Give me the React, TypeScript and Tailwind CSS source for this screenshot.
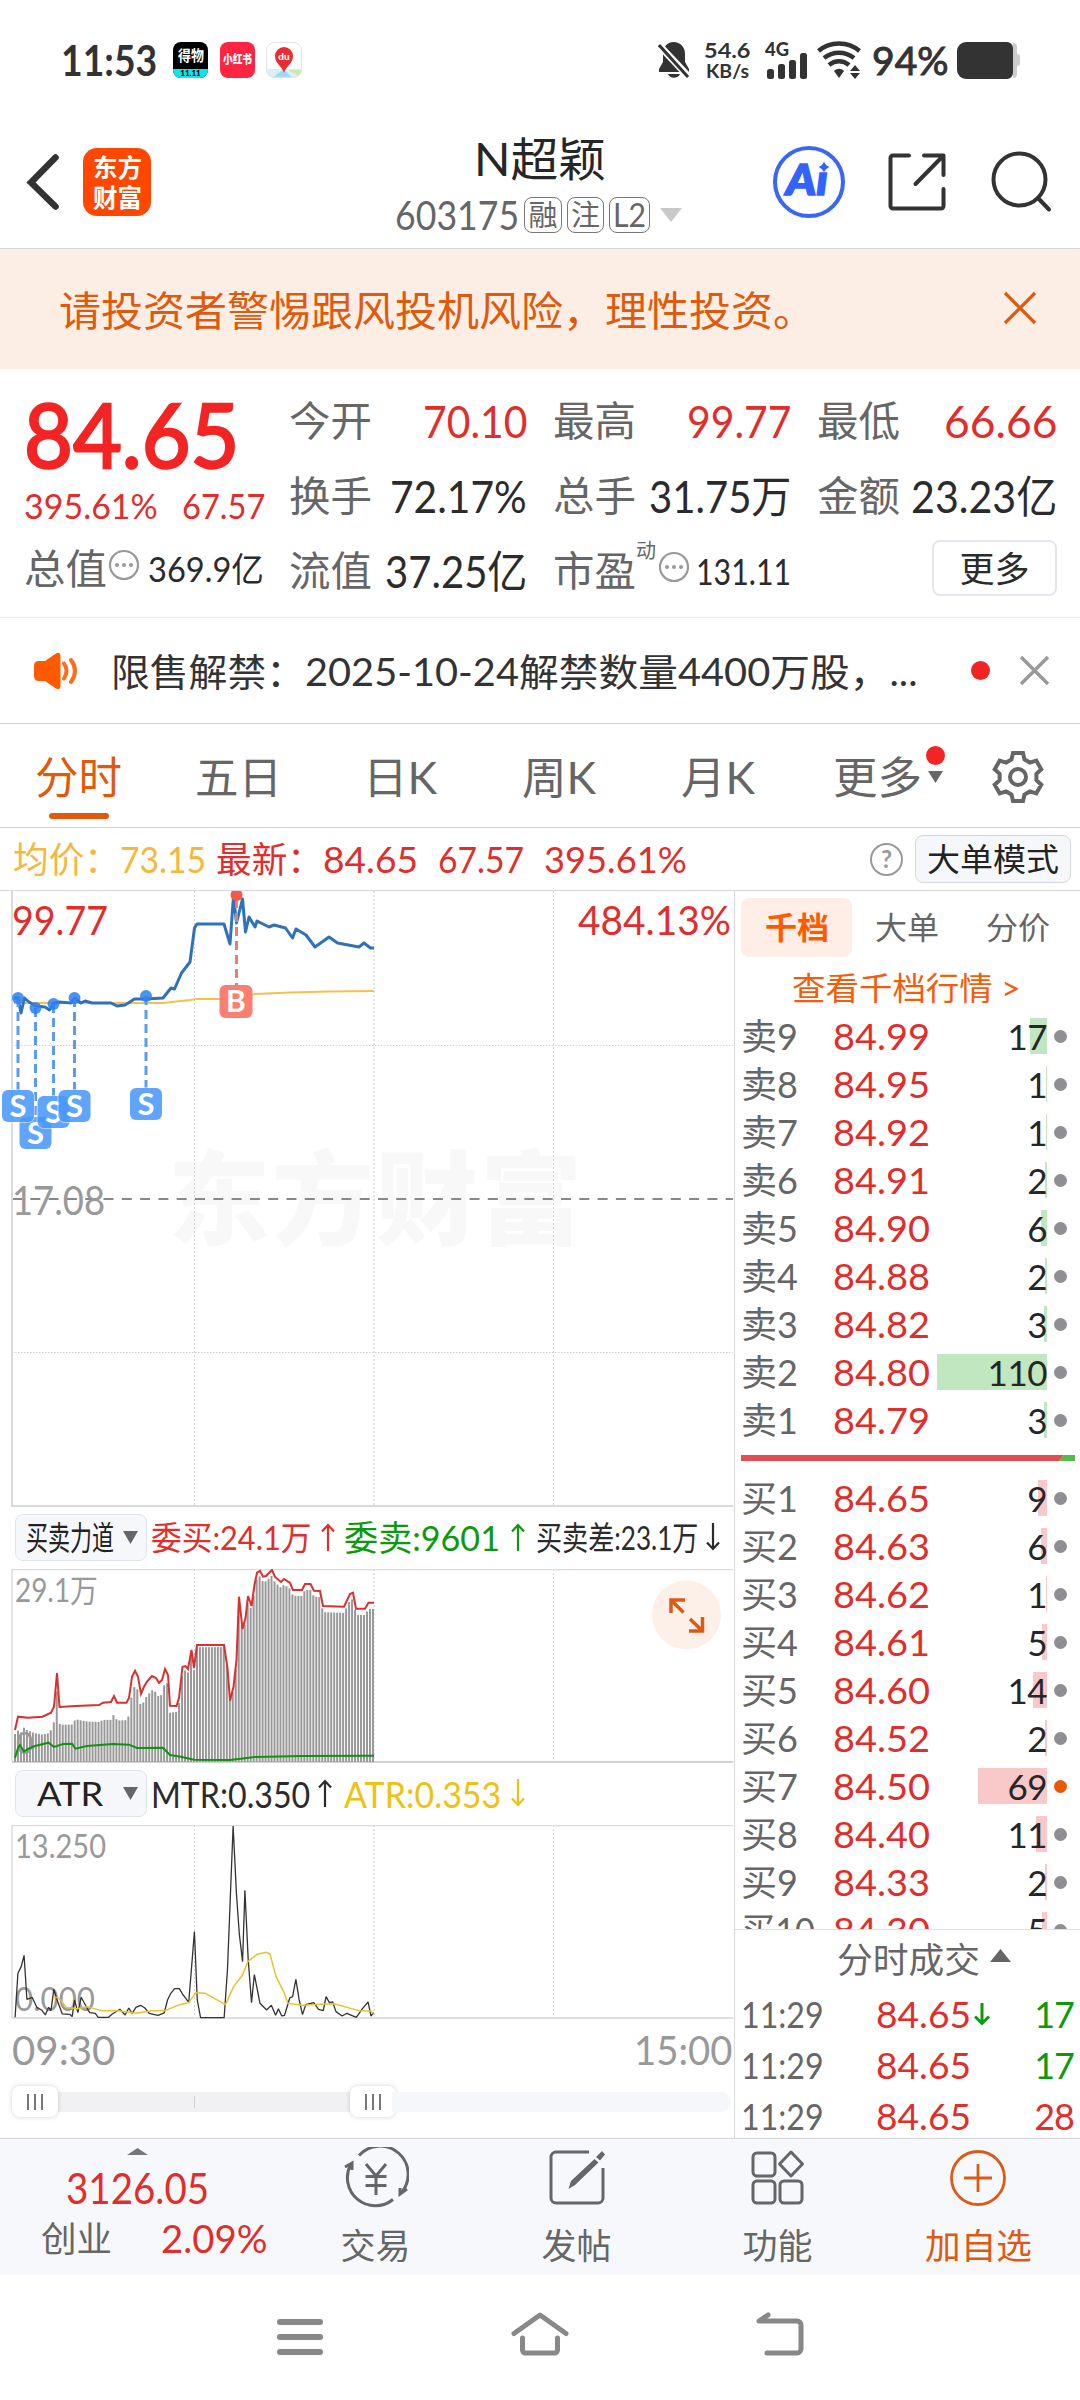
import { useLayoutEffect, useRef, type ReactNode } from "react";
import clsx from "clsx";

// Single line of text squeezed or stretched to a fixed width
function Fit({ w, className, children }: { w: number; className?: string; children: ReactNode }) {
  const ref = useRef<HTMLSpanElement>(null);

  useLayoutEffect(() => {
    const el = ref.current;
    if (el) el.style.transform = `scaleX(${w / el.offsetWidth})`;
  }, [w, children]);

  return (
    <span className={clsx("inline-block shrink-0", className)} style={{ width: w }}>
      <span ref={ref} className="inline-block origin-left whitespace-pre">
        {children}
      </span>
    </span>
  );
}

const asks = [
  { label: "卖9", price: "84.99", vol: 17 },
  { label: "卖8", price: "84.95", vol: 1 },
  { label: "卖7", price: "84.92", vol: 1 },
  { label: "卖6", price: "84.91", vol: 2 },
  { label: "卖5", price: "84.90", vol: 6 },
  { label: "卖4", price: "84.88", vol: 2 },
  { label: "卖3", price: "84.82", vol: 3 },
  { label: "卖2", price: "84.80", vol: 110 },
  { label: "卖1", price: "84.79", vol: 3 },
];

const bids = [
  { label: "买1", price: "84.65", vol: 9 },
  { label: "买2", price: "84.63", vol: 6 },
  { label: "买3", price: "84.62", vol: 1 },
  { label: "买4", price: "84.61", vol: 5 },
  { label: "买5", price: "84.60", vol: 14 },
  { label: "买6", price: "84.52", vol: 2 },
  { label: "买7", price: "84.50", vol: 69, hot: true },
  { label: "买8", price: "84.40", vol: 11 },
  { label: "买9", price: "84.33", vol: 2 },
  { label: "买10", price: "84.30", vol: 5 },
];

const trades = [
  { time: "11:29", price: "84.65", vol: 17, dir: "down", color: "text-[#0c9a0c]" },
  { time: "11:29", price: "84.65", vol: 17, dir: "", color: "text-[#0c9a0c]" },
  { time: "11:29", price: "84.65", vol: 28, dir: "", color: "text-[#e12d2b]" },
];

const pricePoints =
  "14,107 18,107 21,122 24.5,107 29,111 36,115 45,116 49.5,119 54,112 59,111 71,112 74.5,107 81,112 85,110 92,112 111,112 117,115 125,114 134.5,108 146,108 163,107 171,97 174.5,98 181.5,82 190,71 194.5,37 197,33 224,33 230,53 233.5,5 236.5,32 242.5,8 245.5,41 249,26 255,36 257,30 269,36 274,34 285.5,37 292.5,47 296,38 306,44 315,56 329,46 337.5,52 359,56 364,52 370.5,57 374,57";
const avgPoints =
  "14,112 163,112 190,109 197,108 224,108 240,105 255,103 290,101.5 330,100.5 374,100";

const buyLine: [number, number][] = [
  [15, 161], [18, 147.7], [28, 148.7], [42.5, 147.7], [51, 143.7], [54, 137.7], [57, 104], [59.5, 138],
  [75.5, 137], [99, 136], [103, 133.7], [111, 133], [114, 127], [117, 133.7], [126.5, 133.7], [129, 129],
  [132, 107.7], [135, 101.7], [138, 107.7], [141, 125], [144, 117.7], [147, 112.7], [152, 107], [156, 109],
  [159, 114], [162, 111], [165, 100], [168, 106], [170, 136.7], [176.5, 137], [179, 129], [182.5, 97.7],
  [185.5, 97], [188, 100], [191.5, 81], [194, 99], [197, 76], [224, 76], [227.5, 99], [230, 131.7],
  [233.5, 117.7], [236.5, 91], [239, 27.7], [242.5, 60], [245.5, 49], [248, 27], [251.5, 37], [254.5, 16],
  [257, 3.7], [260, 2], [263, 7.7], [266, 7], [272, 1], [275, 8], [281, 13], [284, 10], [290, 14], [293, 21],
  [302, 21], [305, 15], [310.5, 15], [314, 21.7], [320, 22], [323, 37], [344, 37.7], [350, 25], [353, 23.7],
  [356, 39.7], [365, 39.7], [368.5, 33.7], [374, 33.7],
];
const sellLine: [number, number][] = [
  [15, 189], [18, 179], [20, 176], [24, 182.7], [28, 180], [35, 177], [48.5, 173.7], [54, 178], [63, 175],
  [72, 174.7], [75.5, 179.7], [87, 177], [113, 175], [129, 175.7], [137, 179], [163, 178.7], [170, 186],
  [182, 188], [194, 190.7], [230, 191], [255, 188], [302, 187], [374, 186.7],
];

const mtrPoints =
  "32,742 38,610 45,590 51,556 57,688 68,682 78,712 88,720 96,735 103,712 108,722 114,658 121,690 132,732 148,733 153,740 158,690 165,728 172,682 182,708 190,728 202,730 208,742 230,742 238,732 254,718 265,735 273,714 280,730 288,712 298,706 307,714 316,730 335,736 348,729 355,690 362,670 370,656 380,656 388,675 400,697 412,485 418,690 425,743 475,743 482,600 494,168 501,370 507,490 514,575 519,361 526,570 533,698 539,614 551,700 565,720 575,706 584,736 590,716 597,738 603,736 614,684 620,680 627,628 634,690 641,734 648,704 665,698 675,718 685,722 691,680 698,698 705,696 712,725 725,738 735,730 755,742 768,716 780,696 786,738 792,728";
const atrPoints =
  "114,680 125,685 140,712 165,716 185,710 215,722 250,722 290,730 320,722 350,722 380,704 400,698 415,668 435,670 478,704 495,650 514,615 525,575 545,553 565,547 572,552 585,620 602,668 610,700 640,706 690,702 710,702 760,722 785,723 792,730";

function valueAt(line: [number, number][], x: number) {
  const i = line.findIndex((p) => p[0] >= x);
  if (i <= 0) return line[i < 0 ? line.length - 1 : 0][1];
  const [x0, y0] = line[i - 1];
  const [x1, y1] = line[i];
  return y0 + ((y1 - y0) * (x - x0)) / (x1 - x0);
}

const netBars = Array.from({ length: 121 }, (_, i) => {
  const x = 15 + i * 2.983;
  return { x, h: valueAt(sellLine, x) - valueAt(buyLine, x) };
});

const toPoints = (line: [number, number][]) => line.map((p) => p.join(",")).join(" ");

function Grid({ height }: { height: number }) {
  return (
    <g stroke="#d4d4d4" strokeWidth="1">
      <path d={`M194.5 0V${height}M553.5 0V${height}`} strokeDasharray="2 2" />
      <path d={`M374 0V${height}`} strokeWidth="2" stroke="#e2e2e2" strokeDasharray="2 2" />
    </g>
  );
}

function StatusBar() {
  return (
    <div className="flex h-[120px] items-center pl-[61px] text-[#333]">
      <Fit w={96} className="text-[42px] font-bold">11:53</Fit>
      <div className="ml-4 flex h-9 w-[35px] flex-col items-center justify-between overflow-hidden rounded-lg bg-black">
        <Fit w={26} className="mt-1.5 text-[15px] font-bold text-white">得物</Fit>
        <div className="flex h-[9px] w-full justify-center bg-[#0fe5e6] text-[8px] leading-[9px] font-black text-black">
          11.11
        </div>
      </div>
      <div className="ml-3 flex h-9 w-[35px] items-center justify-center rounded-lg bg-[#fe2442] text-white">
        <Fit w={29} className="text-[12px] font-black">小红书</Fit>
      </div>
      <svg className="ml-[11px]" width="36" height="36" viewBox="0 0 36 36">
        <clipPath id="map">
          <rect x="0.5" y="0.5" width="35" height="35" rx="8" />
        </clipPath>
        <g clipPath="url(#map)">
          <path d="M0 27h36v9H0z" fill="#dbeffa" />
          <path d="M6 36l12-9 8 9z" fill="#9fd9f5" />
          <path d="M22 28h14v8z" fill="#cdeba5" />
        </g>
        <rect x="0.5" y="0.5" width="35" height="35" rx="8" fill="none" stroke="#e2e2e2" />
        <path d="M18 31c-1-6-9-9-9-17a9 9 0 0 1 18 0c0 8-8 11-9 17z" fill="#ea2b2f" />
        <text x="18" y="17.5" fontSize="10" fontWeight="900" textAnchor="middle" fill="#fff">du</text>
      </svg>

      <svg className="ml-[356px]" width="32" height="38" viewBox="0 0 32 38">
        <path d="M15.500 1c7 0 11.500 5 11.500 12v8l4 7v3H1v-3l4-7v-8C5 6 9 1 15.500 1z" fill="#333" />
        <path d="M10 33h12c-2 5-10 5-12 0z" fill="#333" />
        <path d="M-1 2l32 34" stroke="#fff" strokeWidth="7" />
        <path d="M1 4l29 32" stroke="#333" strokeWidth="3" />
      </svg>
      <div className="ml-3.5 flex flex-col items-center gap-px text-[20px] font-bold">
        <Fit w={47}>54.6</Fit>
        <Fit w={43} className="text-[19px]">KB/s</Fit>
      </div>
      <svg className="ml-3.5 overflow-visible" width="44" height="38" viewBox="0 0 44 38">
        <text x="0" y="15" fontSize="18" fontWeight="900" textLength="24" lengthAdjust="spacingAndGlyphs" fill="#333">4G</text>
        <g fill="#333">
          <rect x="2" y="28" width="7" height="10" rx="2.500" />
          <rect x="13" y="23" width="7" height="15" rx="2.500" />
          <rect x="24" y="19" width="7" height="19" rx="2.500" />
          <rect x="35" y="12" width="7" height="26" rx="2.500" />
        </g>
      </svg>
      <svg className="ml-2" width="46" height="38" viewBox="0 0 46 38" fill="none" stroke="#333" strokeWidth="4.500">
        <path d="M1.500 10C13 0 31 0 42.500 10" />
        <path d="M7 17c9-7 21-7 30 0" />
        <path d="M12 24c6-5 14-5 20 0" />
        <path d="M17 30c3-3 7-3 10 0l-5 7z" fill="#333" stroke="none" />
        <path d="M38 24l5 6H33zM33 32h10l-5 6z" fill="#333" stroke="none" />
      </svg>
      <Fit w={77} className="ml-[9px] text-[38px] [-webkit-text-stroke:1px_#333]">94%</Fit>
      <div className="ml-2 flex items-center">
        <div className="h-[37px] w-[56px] rounded-l-[9px] rounded-r-[6px] bg-[#333]" />
        <div className="h-[35px] w-[4px] rounded-r-[6px] bg-[#ccc]" />
        <div className="h-3 w-[3px] rounded-r bg-[#ccc]" />
      </div>
    </div>
  );
}

function Header() {
  return (
    <header className="flex h-[129px] items-center border-b border-[#d3d5db] pb-1 pl-[26px]">
      <svg width="34" height="58" viewBox="0 0 34 58" fill="none" stroke="#333" strokeWidth="6.500">
        <path d="M29.500 4.500L5 29.500l24.500 24" strokeLinecap="round" />
      </svg>
      <div className="ml-[23px] flex h-[68px] w-[68px] flex-col items-center justify-center gap-1 rounded-[14px] bg-[#ff4700] text-[25px] leading-[26px] font-bold text-white">
        <Fit w={49}>东方</Fit>
        <Fit w={49}>财富</Fit>
      </div>
      <div className="ml-[244px] flex w-[287px] flex-col pt-1">
        <Fit w={132} className="ml-[79px] text-[46px] text-[#262626]">N超颖</Fit>
        <div className="mt-[15px] flex h-9 items-center text-[#666]">
          <Fit w={124} className="text-[40px]">603175</Fit>
          <span className="ml-[5px] flex h-9 w-[38px] items-center justify-center rounded-lg border border-[#777] text-[29px]">融</span>
          <span className="ml-[5px] flex h-9 w-[37px] items-center justify-center rounded-lg border border-[#777] text-[29px]">注</span>
          <span className="ml-[5px] flex h-9 w-[41px] items-center justify-center rounded-lg border border-[#777] text-[32px]">
            <Fit w={33}>L2</Fit>
          </span>
          <svg className="ml-[10px]" width="22" height="14" viewBox="0 0 22 14">
            <path d="M0 0h22L11 14z" fill="#c8c8c8" />
          </svg>
        </div>
      </div>
      <svg className="ml-[90px]" width="74" height="74" viewBox="0 0 74 74">
        <circle cx="37" cy="37" r="34" fill="none" stroke="#3a66f6" strokeWidth="4" />
        <text x="14" y="50" fontSize="42" fontWeight="900" fontStyle="italic" fill="#3363ff" stroke="#3363ff" strokeWidth="1.500" textLength="42" lengthAdjust="spacingAndGlyphs">Aı</text>
        <path d="M52 16.500q1.500 4 5.500 5.500-4 1.500-5.500 5.500-1.500-4-5.500-5.500 4-1.500 5.500-5.500z" fill="#3363ff" />
      </svg>
      <svg className="ml-[41px]" width="60" height="60" viewBox="0 0 60 60" fill="none" stroke="#333" strokeWidth="4" strokeLinecap="round" strokeLinejoin="round">
        <path d="M22 3.500H6a2.500 2.500 0 0 0-2.500 2.500v48A2.500 2.500 0 0 0 6 56.500h48a2.500 2.500 0 0 0 2.500-2.500V37" />
        <path d="M37 3.500h19.500V23M56 4L28.500 32" />
      </svg>
      <svg className="ml-[43px]" width="62" height="62" viewBox="0 0 62 62" fill="none" stroke="#333" strokeWidth="4" strokeLinecap="round">
        <circle cx="29.500" cy="28.500" r="26" />
        <path d="M48 47L59 58.500" />
      </svg>
    </header>
  );
}

function MoreDots() {
  return (
    <svg width="32" height="32" viewBox="0 0 32 32">
      <circle cx="16" cy="16" r="14" fill="none" stroke="#999" strokeWidth="2.200" />
      <g fill="#999">
        <circle cx="9" cy="16" r="2" />
        <circle cx="16" cy="16" r="2" />
        <circle cx="23" cy="16" r="2" />
      </g>
    </svg>
  );
}

function Stat({ label, value, w, red }: { label: string; value: string; w: number; red?: boolean }) {
  return (
    <div className="flex h-[75px] items-center justify-between">
      <Fit w={83} className="text-[41px] text-[#666]">{label}</Fit>
      <Fit w={w} className={clsx("text-[44px]", red ? "text-[#e12d2b]" : "text-[#2b2b2b]")}>{value}</Fit>
    </div>
  );
}

function Quote() {
  return (
    <section className="flex h-[249px] border-b border-[#ebebeb] pt-[14px] pl-6 leading-none">
      <div className="w-[241px]">
        <Fit w={216} className="mt-1.5 text-[89px] text-[#f32424] [-webkit-text-stroke:2.5px_#f32424]">84.65</Fit>
        <div className="mt-[10px] flex justify-between text-[35px] text-[#e12d2b]">
          <Fit w={134}>395.61%</Fit>
          <Fit w={83}>67.57</Fit>
        </div>
        <div className="mt-[25px] flex items-center">
          <Fit w={83} className="text-[41px] text-[#666]">总值</Fit>
          <div className="-mt-2 ml-px">
            <MoreDots />
          </div>
          <Fit w={116} className="ml-2 text-[34px] text-[#2b2b2b]">369.9亿</Fit>
        </div>
      </div>
      <div className="ml-6 w-[238px]">
        <Stat label="今开" value="70.10" w={104} red />
        <Stat label="换手" value="72.17%" w={137} />
        <Stat label="流值" value="37.25亿" w={142} />
      </div>
      <div className="ml-[26px] w-[238px]">
        <Stat label="最高" value="99.77" w={104} red />
        <Stat label="总手" value="31.75万" w={142} />
        <div className="flex h-[75px] items-center">
          <Fit w={83} className="text-[41px] text-[#666]">市盈</Fit>
          <span className="-mt-[41px] text-[20px] text-[#666]">动</span>
          <div className="-mt-2 ml-0.5">
            <MoreDots />
          </div>
          <Fit w={95} className="ml-1.5 text-[37px] text-[#2b2b2b]">131.11</Fit>
        </div>
      </div>
      <div className="ml-[26px] w-[240px]">
        <Stat label="最低" value="66.66" w={113} red />
        <Stat label="金额" value="23.23亿" w={146} />
        <div className="mt-[7px] ml-auto flex h-[56px] w-[125px] items-center justify-center rounded-lg border-2 border-[#e6e7ec] text-[#2b2b2b]">
          <Fit w={70} className="text-[35px]">更多</Fit>
        </div>
      </div>
    </section>
  );
}

function Announcement() {
  return (
    <div className="flex h-[106px] items-center border-b border-[#d8d8d8] pl-[33px]">
      <svg width="46" height="38" viewBox="0 0 46 38">
        <path d="M1 14q0-5 5-5h6L23 1.500q4-2 4.500 2v31q-.5 4-4.500 2L12 29H6q-5 0-5-5z" fill="#ff5a00" />
        <path d="M31 11.500q5 7.500 0 15M38 8q8 11 0 22" fill="none" stroke="#ff6d1c" strokeWidth="4" strokeLinecap="round" />
      </svg>
      <Fit w={194} className="ml-8 text-[38px] text-[#333]">限售解禁：</Fit>
      <Fit w={613} className="text-[38px] text-[#333]">2025-10-24解禁数量4400万股，...</Fit>
      <div className="ml-[53px] h-[19px] w-[19px] rounded-full bg-[#f32424]" />
      <svg className="ml-[29px]" width="31" height="31" viewBox="0 0 31 31" stroke="#999" strokeWidth="3.500">
        <path d="M2 2l27 27M29 2L2 29" />
      </svg>
    </div>
  );
}

function Tabs() {
  return (
    <nav className="flex h-[104px] items-center border-b border-[#d8d8d8] pt-0.5 pl-[35px] text-[44px] text-[#666]">
      <div className="relative">
        <Fit w={87} className="text-[#e0590d]">分时</Fit>
        <div className="absolute -bottom-[20px] left-[14px] h-1.5 w-[60px] rounded-full bg-[#e0590d]" />
      </div>
      <Fit w={87} className="ml-[73px]">五日</Fit>
      <Fit w={74} className="ml-[81px]">日K</Fit>
      <Fit w={74} className="ml-[85px]">周K</Fit>
      <Fit w={74} className="ml-[85px]">月K</Fit>
      <div className="relative ml-[78px] flex items-center">
        <Fit w={89}>更多</Fit>
        <svg className="ml-1.5" width="15" height="12" viewBox="0 0 15 12">
          <path d="M0 0h15L7.500 12z" fill="#666" />
        </svg>
        <div className="absolute -top-[9px] -right-0.5 h-[19px] w-[19px] rounded-full bg-[#f32424]" />
      </div>
      <svg className="ml-[48px]" width="54" height="54" viewBox="0 0 54 54" fill="none" stroke="#666" strokeWidth="4">
        <path d="M20.500 9.500L22 3h10l1.500 6.500 5.400 3.100 6.400-1.900 5 8.600-4.900 4.600v6.200l4.900 4.600-5 8.600-6.400-1.900-5.400 3.100L32 51H22l-1.500-6.500-5.400-3.100-6.400 1.900-5-8.600 4.900-4.600v-6.200l-4.900-4.600 5-8.600 6.400 1.900z" />
        <circle cx="27" cy="27" r="8" />
      </svg>
    </nav>
  );
}

function InfoRow() {
  return (
    <div className="flex h-[63px] items-center border-b border-[#d8d8d8] pl-[13px] text-[36px] text-[#e12d2b]">
      <Fit w={107} className="text-[#f5b73c]">均价：</Fit>
      <Fit w={86} className="text-[#f5b73c]">73.15</Fit>
      <Fit w={107} className="ml-[10px]">最新：</Fit>
      <Fit w={95}>84.65</Fit>
      <Fit w={86} className="ml-5">67.57</Fit>
      <Fit w={143} className="ml-5">395.61%</Fit>
      <div className="ml-[183px] flex h-[33px] w-[33px] items-center justify-center rounded-full border-[2.500px] border-[#999] text-[24px] font-bold text-[#999]">
        ?
      </div>
      <div className="ml-[12px] flex h-[48px] w-[156px] items-center justify-center rounded-lg border border-[#d3d7e0] bg-[#f6f7fb] text-[#222]">
        <Fit w={132} className="text-[32px]">大单模式</Fit>
      </div>
    </div>
  );
}

const marks = [
  { x: 35.500, dotY: 117, y: 242 },
  { x: 53.500, dotY: 113, y: 221 },
  { x: 18, dotY: 107, y: 215 },
  { x: 74.500, dotY: 107, y: 215 },
  { x: 146, dotY: 105, y: 213 },
];

function PriceChart() {
  return (
    <svg className="block" width="734" height="616" viewBox="0 0 734 616">
      <text x="168" y="346" fontSize="102" fontWeight="900" fill="#f8f8f8" textLength="414">东方财富</text>
      <Grid height={615} />
      <path d="M12 154.500H733M12 461.500H733" stroke="#cfcfcf" strokeDasharray="1.500 1.500" />
      <path d="M12 308H733" stroke="#888" strokeWidth="2" strokeDasharray="10 8.300" />
      <path d="M12 0V615H733" fill="none" stroke="#d9dadb" strokeWidth="2" />
      <text x="12" y="44" fontSize="41" fill="#e12d2b" textLength="96" lengthAdjust="spacingAndGlyphs">99.77</text>
      <text x="578" y="44" fontSize="41" fill="#e12d2b" textLength="153" lengthAdjust="spacingAndGlyphs">484.13%</text>
      <text x="12" y="324" fontSize="41" fill="#999" textLength="93" lengthAdjust="spacingAndGlyphs">17.08</text>
      <polyline points={avgPoints} fill="none" stroke="#f8c04a" strokeWidth="2" />
      <polyline points={pricePoints} fill="none" stroke="#2f72b8" strokeWidth="3" strokeLinejoin="round" />
      {marks.map((m) => (
        <g key={m.x}>
          <path d={`M${m.x} ${m.dotY}V${m.y - 16}`} stroke="#5b9de8" strokeWidth="3" strokeDasharray="9 5" />
          <circle cx={m.x} cy={m.dotY} r="6" fill="#2b80f0" fillOpacity="0.850" />
          <rect x={m.x - 17} y={m.y - 17} width="34" height="34" rx="7" fill="#fff" fillOpacity="0.500" />
          <rect x={m.x - 16} y={m.y - 16} width="32" height="32" rx="6" fill="#2b85fb" fillOpacity="0.750" />
          <text x={m.x} y={m.y + 11} fontSize="31" fontWeight="700" textAnchor="middle" fill="#fff">S</text>
        </g>
      ))}
      <path d="M236.500 8V96" stroke="#e87d70" strokeWidth="3" strokeDasharray="9 5" />
      <circle cx="236.500" cy="4" r="6" fill="#f4594a" />
      <rect x="219.500" y="94" width="33" height="33" rx="6" fill="#fa7f70" />
      <text x="236" y="121" fontSize="30" fontWeight="700" textAnchor="middle" fill="#fff">B</text>
    </svg>
  );
}

function IndicatorButton({ label, w }: { label: string; w: number }) {
  return (
    <div className="flex h-[47px] w-[132px] shrink-0 items-center rounded-lg border border-[#dfe3ea] bg-[#f6f7fb] pr-2 text-[33px] text-[#222]">
      <div className="flex flex-1 justify-center">
        <Fit w={w}>{label}</Fit>
      </div>
      <svg width="15" height="13" viewBox="0 0 15 13">
        <path d="M0 0h15L7.500 13z" fill="#666" />
      </svg>
    </div>
  );
}

function Arrow({ down, className }: { down?: boolean; className?: string }) {
  return (
    <svg className={clsx("shrink-0", className)} width="14" height="28" viewBox="0 0 14 28" fill="none" stroke="currentColor" strokeWidth="2.200">
      <path d={down ? "M7 0v26M1 19.500l6 6.500 6-6.500" : "M7 28V2M1 8.500L7 2l6 6.500"} />
    </svg>
  );
}

function ForceChart() {
  return (
    <svg className="block" width="734" height="194" viewBox="0 0 734 194">
      <Grid height={193} />
      <path d="M12 193V.5H733" fill="none" stroke="#dcdcdc" strokeWidth="1.500" />
      <path d="M12 193H733" stroke="#d2d2d2" strokeWidth="2" />
      <text x="15" y="33" fontSize="32" fill="#999" textLength="83" lengthAdjust="spacingAndGlyphs">29.1万</text>
      {netBars.map((b) => (
        <rect key={b.x} x={b.x - 1} y={193 - b.h} width="2" height={b.h} fill="#999" />
      ))}
      <text x="16" y="185" fontSize="30" fill="#999">0</text>
      <polyline points={toPoints(buyLine)} fill="none" stroke="#d93030" strokeWidth="2" />
      <polyline points={toPoints(sellLine)} fill="none" stroke="#159015" strokeWidth="2" />
      <circle cx="686.500" cy="46" r="34.500" fill="#fdf0e9" />
      <path d="M671 44V31h14M671.500 31.500l12 12M689 62h13.500V48M702 61.500L690 50" fill="none" stroke="#de5a14" strokeWidth="3.500" />
    </svg>
  );
}

function AtrChart() {
  return (
    <svg className="block" width="734" height="194" viewBox="0 0 734 194">
      <Grid height={193} />
      <path d="M12 193V.5H733" fill="none" stroke="#dcdcdc" strokeWidth="1.500" />
      <path d="M12 193H733" stroke="#dedede" strokeWidth="2" />
      <text x="15" y="33" fontSize="32" fill="#999" textLength="91" lengthAdjust="spacingAndGlyphs">13.250</text>
      <text x="15" y="186" fontSize="32" fill="#999" textLength="80" lengthAdjust="spacingAndGlyphs">0.000</text>
      <g transform="translate(0 -55) scale(0.4719 0.3333)" fill="none" strokeLinejoin="bevel">
        <polyline points={mtrPoints} stroke="#333" strokeWidth="1.300" vectorEffect="non-scaling-stroke" />
        <polyline points={atrPoints} stroke="#e6c331" strokeWidth="1.500" vectorEffect="non-scaling-stroke" />
      </g>
    </svg>
  );
}

function SliderHandle() {
  return (
    <div className="z-10 flex h-[31px] w-[46px] items-center justify-center gap-[5px] rounded-lg bg-white shadow-[0_0_5px_rgba(0,0,0,0.180)]">
      <div className="h-4 w-0.5 bg-[#777]" />
      <div className="h-4 w-0.5 bg-[#777]" />
      <div className="h-4 w-0.5 bg-[#777]" />
    </div>
  );
}

function ChartColumn() {
  return (
    <div className="w-[734px]">
      <PriceChart />
      <div className="flex h-[62px] items-center pb-0.5 pl-[15px] text-[33px]">
        <IndicatorButton label="买卖力道" w={88} />
        <Fit w={160} className="ml-1 text-[#e12d2b]">委买:24.1万</Fit>
        <Arrow className="ml-[10px] text-[#e12d2b]" />
        <Fit w={156} className="ml-[9px] text-[35px] text-[#0c9a0c]">委卖:9601</Fit>
        <Arrow className="ml-[11px] text-[#0c9a0c]" />
        <Fit w={162} className="ml-[11px] text-[#2b2b2b]">买卖差:23.1万</Fit>
        <Arrow down className="ml-2 text-[#2b2b2b]" />
      </div>
      <ForceChart />
      <div className="flex h-[62px] items-center pb-0.5 pl-[15px] text-[37px]">
        <IndicatorButton label="ATR" w={66} />
        <Fit w={159} className="ml-1 text-[#2b2b2b]">MTR:0.350</Fit>
        <Arrow className="ml-2 text-[#2b2b2b]" />
        <Fit w={157} className="ml-3 text-[#eec211]">ATR:0.353</Fit>
        <Arrow down className="ml-[10px] text-[#eec211]" />
      </div>
      <AtrChart />
      <div className="flex h-[62px] items-center justify-between pr-0.5 pb-0.5 pl-3 text-[41px] text-[#999]">
        <Fit w={103}>09:30</Fit>
        <Fit w={98}>15:00</Fit>
      </div>
      <div className="flex h-[41px] items-center pl-3">
        <SliderHandle />
        <div className="-ml-1 flex h-5 w-[300px] items-center bg-[#f1f1f4] pl-[140px]">
          <div className="h-3 w-px bg-[#d0d0d4]" />
        </div>
        <div className="-ml-1">
          <SliderHandle />
        </div>
        <div className="-ml-1 h-5 w-[339px] rounded-r-full bg-[#f6f7fa]" />
      </div>
    </div>
  );
}

type Level = { label: string; price: string; vol: number; hot?: boolean };

function LevelRow({ level, barClass }: { level: Level; barClass: string }) {
  return (
    <div className="flex h-12 shrink-0 items-center text-[36px]">
      <Fit w={level.label.length > 2 ? 74 : 57} className="text-[#666]">{level.label}</Fit>
      <div className={clsx("flex text-[#e12d2b]", level.label.length > 2 ? "ml-[18px]" : "ml-[35px]")}>
        <Fit w={97}>{level.price}</Fit>
      </div>
      <div className="relative flex h-9 flex-1 items-center justify-end text-[#262626]">
        <div className={clsx("absolute top-0 right-0 h-9", barClass)} style={{ width: level.vol }} />
        <span className="relative text-[35px] tracking-[-0.5px]">{level.vol}</span>
      </div>
      <div className={clsx("mr-[13px] ml-[7px] h-[13px] w-[13px] rounded-full", level.hot ? "bg-[#e8590c]" : "bg-[#8e8e93]")} />
    </div>
  );
}

function OrderBook() {
  return (
    <div className="flex flex-1 flex-col border-l border-[#d8d8d8] pl-1.5">
      <div className="mt-[7px] flex h-[59px] shrink-0 items-center text-[31px] text-[#666]">
        <div className="flex h-full w-[111px] items-center justify-center rounded-lg bg-[#ffeee5] font-bold text-[#ff5a00]">
          <Fit w={64}>千档</Fit>
        </div>
        <Fit w={64} className="ml-[23px]">大单</Fit>
        <Fit w={64} className="ml-[47px]">分价</Fit>
      </div>
      <div className="flex h-[55px] shrink-0 items-center pt-1.5 pl-[51px] text-[32px] text-[#f45c0a]">
        <Fit w={229}>查看千档行情 &gt;</Fit>
      </div>
      <div className="flex flex-col">
        {asks.map((a) => (
          <LevelRow key={a.label} level={a} barClass="bg-[#c0e7c0]" />
        ))}
      </div>
      <svg className="mt-[11px] mb-[13px] shrink-0" width="334" height="6" viewBox="0 0 334 6">
        <path d="M0 0h323l-5 6H0z" fill="#e04e50" />
        <path d="M323 0h11v6h-16z" fill="#58b848" />
      </svg>
      <div className="flex h-[455px] shrink-0 flex-col overflow-hidden">
        {bids.map((b) => (
          <LevelRow key={b.label} level={b} barClass="bg-[#f9c8c8]" />
        ))}
      </div>
      <div className="-ml-1.5 flex h-[59px] shrink-0 items-center gap-2.5 border-t border-[#e2e2e2] pl-[102px] text-[35px] text-[#666]">
        <Fit w={143}>分时成交</Fit>
        <svg className="-mt-2" width="21" height="13" viewBox="0 0 21 13">
          <path d="M0 13h21L10.500 0z" fill="#666" />
        </svg>
      </div>
      {trades.map((t, i) => (
        <div key={i} className="flex h-[51px] shrink-0 items-center pr-1.5 text-[36px]">
          <Fit w={83} className="text-[#666]">{t.time}</Fit>
          <Fit w={95} className="ml-[52px] text-[#e12d2b]">{t.price}</Fit>
          {t.dir === "down" && (
            <svg className="ml-[3px]" width="16" height="24" viewBox="0 0 16 24" fill="none" stroke="#0c9a0c" strokeWidth="3">
              <path d="M8 1v20M1 14.500l7 7 7-7" />
            </svg>
          )}
          <span className={clsx("ml-auto tracking-[-1px]", t.color)}>{t.vol}</span>
        </div>
      ))}
    </div>
  );
}

function BottomBar() {
  return (
    <footer className="flex h-[137px] border-t border-[#d3d5db] bg-[#f6f8fb] text-[35px] text-[#666]">
      <div className="flex w-[275px] flex-col items-center pt-[9px]">
        <svg width="21" height="7" viewBox="0 0 21 7">
          <path d="M0 7h21L10.500 0z" fill="#777" />
        </svg>
        <Fit w={143} className="mt-[12px] text-[42px] text-[#e12d2b]">3126.05</Fit>
        <div className="mt-[10px] ml-[34px] flex w-[227px] items-center justify-between">
          <Fit w={71}>创业</Fit>
          <Fit w={107} className="text-[38px] text-[#e12d2b]">2.09%</Fit>
        </div>
      </div>
      <div className="flex w-[201px] flex-col items-center pt-2">
        <svg width="66" height="62" viewBox="0 0 66 62" fill="none" stroke="#666" strokeWidth="3">
          <path d="M16 8.500A28 28 0 0 1 58 46M50 52.500A28 28 0 0 1 8 17" />
          <path d="M2 20l7-4v7M64 42l-7 5v-6" />
          <path d="M23 17l10 12 10-12M33 29v19M22.500 29.500h21M22.500 38.500h21" />
        </svg>
        <Fit w={70} className="mt-[19px]">交易</Fit>
      </div>
      <div className="flex w-[201px] flex-col items-center pt-2">
        <svg width="62" height="62" viewBox="0 0 62 62" fill="none" stroke="#666" strokeWidth="3">
          <path d="M43 5H10a5 5 0 0 0-5 5v41a5 5 0 0 0 5 5h42a5 5 0 0 0 5-5V21" />
          <path d="M56 4l3 3.500-5 6-4-3.500zM48.500 12l4 3.500L29 38l-6.500 4 2.500-8z" fill="#666" stroke="none" />
        </svg>
        <Fit w={70} className="mt-[19px]">发帖</Fit>
      </div>
      <div className="flex w-[201px] flex-col items-center pt-2">
        <svg width="62" height="62" viewBox="0 0 62 62" fill="none" stroke="#666" strokeWidth="3">
          <rect x="6" y="6" width="22" height="23" rx="4" />
          <rect x="6" y="34" width="22" height="22" rx="4" />
          <rect x="33" y="34" width="22" height="22" rx="4" />
          <path d="M44 5l11.500 12L44 29 32.500 17z" strokeLinejoin="round" />
        </svg>
        <Fit w={70} className="mt-[19px]">功能</Fit>
      </div>
      <div className="flex w-[200px] flex-col items-center pt-2 text-[#dd5a14]">
        <svg width="62" height="62" viewBox="0 0 62 62" fill="none" stroke="#dd5a14" strokeWidth="2.800">
          <circle cx="31" cy="31" r="26.500" />
          <path d="M31 17v28M17 31h28" />
        </svg>
        <Fit w={107} className="mt-[19px]">加自选</Fit>
      </div>
    </footer>
  );
}

function SystemNav() {
  return (
    <div className="flex h-[124px] items-center pl-[277px]">
      <div className="flex w-[46px] flex-col gap-[9px]">
        <div className="h-1.5 rounded-full bg-[#888]" />
        <div className="h-1.5 rounded-full bg-[#888]" />
        <div className="h-1.5 rounded-full bg-[#888]" />
      </div>
      <svg className="-mt-1.5 ml-[187px]" width="60" height="46" viewBox="0 0 60 46" fill="none" stroke="#888" strokeWidth="5" strokeLinecap="round" strokeLinejoin="round">
        <path d="M4 22.500L30 4l26 18.500" />
        <path d="M12.500 27v12a3 3 0 0 0 3 3h29a3 3 0 0 0 3-3V27" />
      </svg>
      <svg className="-mt-1.5 ml-[185px]" width="50" height="46" viewBox="0 0 50 46" fill="none" stroke="#888" strokeWidth="5" strokeLinecap="round" strokeLinejoin="round">
        <path d="M13 4L4 10h38a4 4 0 0 1 4 4v24a4 4 0 0 1-4 4H12" />
      </svg>
    </div>
  );
}

export default function App() {
  return (
    <div className="h-[2400px] w-[1080px] overflow-hidden bg-white font-['Lato','Noto_Sans_CJK_SC',sans-serif] leading-none">
      <StatusBar />
      <Header />
      <div className="flex h-[120px] items-center bg-[#fdeee5] pt-0.5 pl-[59px] text-[#df5a0c]">
        <Fit w={756} className="text-[41px]">请投资者警惕跟风投机风险，理性投资。</Fit>
        <svg className="-mt-1 ml-[188px]" width="34" height="34" viewBox="0 0 34 34" stroke="#df5a0c" strokeWidth="3.200">
          <path d="M2 2l30 30M32 2L2 32" />
        </svg>
      </div>
      <Quote />
      <Announcement />
      <Tabs />
      <InfoRow />
      <div className="flex h-[1247px] overflow-hidden">
        <ChartColumn />
        <OrderBook />
      </div>
      <BottomBar />
      <SystemNav />
    </div>
  );
}
